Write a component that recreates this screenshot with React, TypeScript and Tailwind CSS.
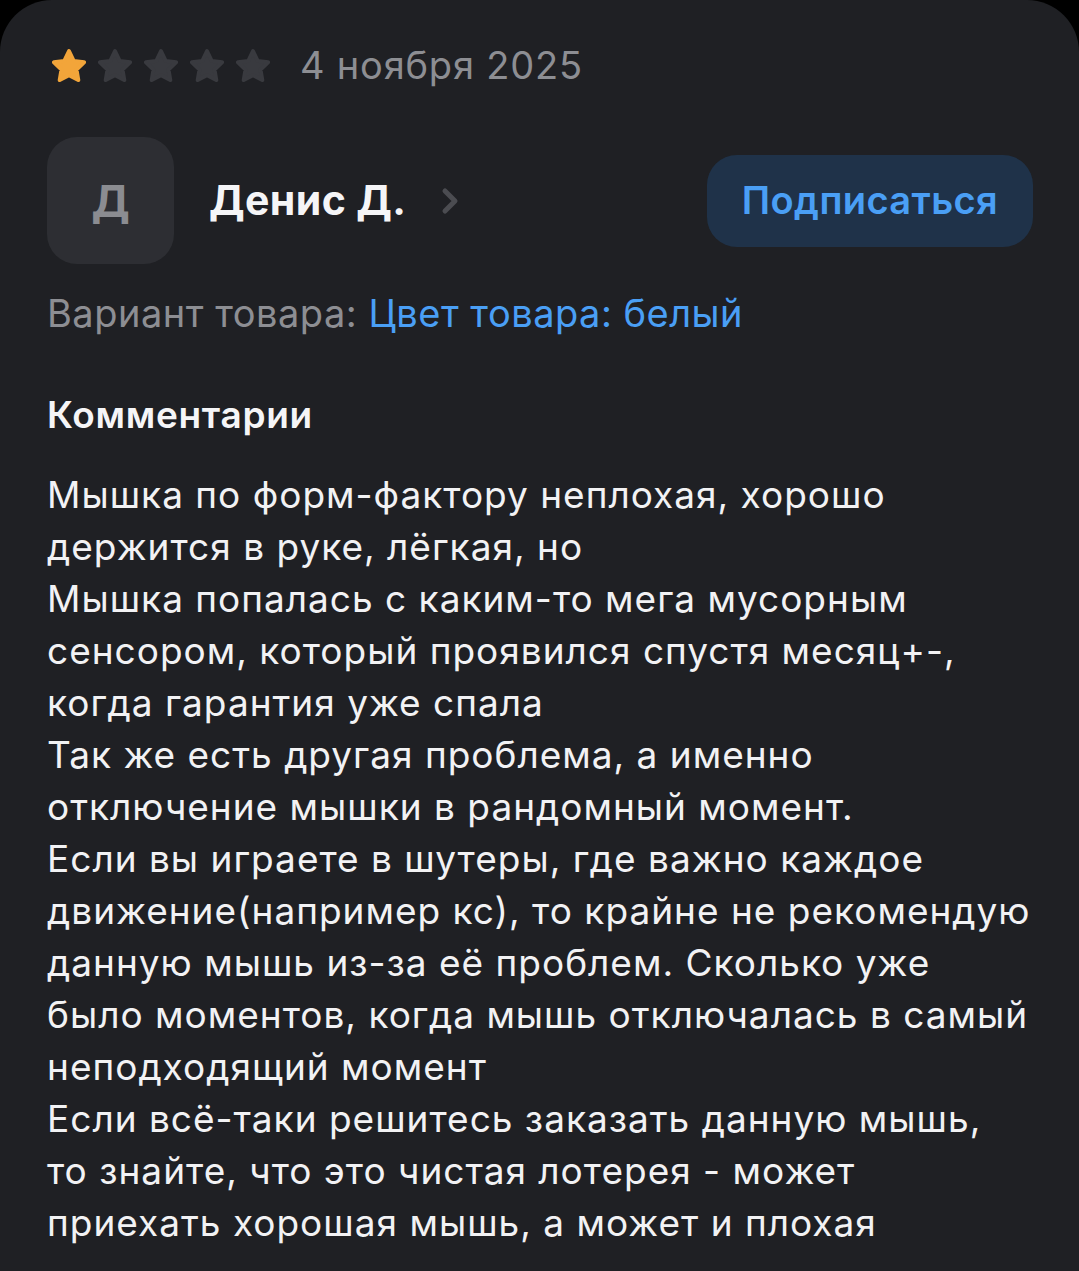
import React from 'react';

const Star = ({ filled }: { filled: boolean }) => {
  const color = filled ? '#f2a53a' : '#393a3f';
  return (
    <svg width="34" height="33" viewBox="2.6 2 18.8 18.4" aria-hidden="true">
      <path
        d="M12 3.2l2.6 5.4 5.8.8-4.2 4.1 1 5.8L12 16.6l-5.2 2.7 1-5.8-4.2-4.1 5.8-.8z"
        fill={color}
        stroke={color}
        strokeWidth={2.2}
        strokeLinejoin="round"
      />
    </svg>
  );
};

// lines as they wrap in the app
const lines = [
  'Мышка по форм-фактору неплохая, хорошо',
  'держится в руке, лёгкая, но',
  'Мышка попалась с каким-то мега мусорным',
  'сенсором, который проявился спустя месяц+-,',
  'когда гарантия уже спала',
  'Так же есть другая проблема, а именно',
  'отключение мышки в рандомный момент.',
  'Если вы играете в шутеры, где важно каждое',
  'движение(например кс), то крайне не рекомендую',
  'данную мышь из-за её проблем. Сколько уже',
  'было моментов, когда мышь отключалась в самый',
  'неподходящий момент',
  'Если всё-таки решитесь заказать данную мышь,',
  'то знайте, что это чистая лотерея - может',
  'приехать хорошая мышь, а может и плохая',
];

export default function App() {
  return (
    <div
      className="min-h-[1271px] w-[1079px] bg-black"
      style={{ fontFamily: 'Inter, "Noto Sans", sans-serif' }}
    >
      <div className="min-h-[1271px] rounded-t-[52px] bg-[#1f2024] px-[47px] pt-[44px]">
        {/* rating + date */}
        <div className="flex h-[42px] items-center">
          <div className="ml-[5px] flex gap-[12px]">
            {[0, 1, 2, 3, 4].map(i => (
              <Star key={i} filled={i === 0} />
            ))}
          </div>
          <span className="ml-[30px] text-[38px] leading-[42px] tracking-[0.8px] text-[#8d8e93]">4 ноября 2025</span>
        </div>

        {/* author row */}
        <div className="mt-[51px] flex items-center">
          <div className="flex h-[127px] w-[127px] items-center justify-center rounded-[30px] bg-[#2d2e33]">
            <span className="text-[44px] font-bold text-[#8b8c91]">Д</span>
          </div>
          <span className="ml-[35px] text-[41px] font-bold tracking-[0.4px] text-[#f5f5f7]">Денис Д.</span>
          <svg className="ml-[33px]" width="22" height="30" viewBox="0 0 22 30" aria-hidden="true">
            <path d="M6 5l10 10-10 10" fill="none" stroke="#4b4c51" strokeWidth={5} strokeLinecap="round" strokeLinejoin="round" />
          </svg>
          <button className="ml-auto mr-[-1px] h-[92px] w-[326px] rounded-[30px] bg-[#1f3249] text-[38px] font-semibold tracking-[0.4px] text-[#4a9ff5]">
            Подписаться
          </button>
        </div>

        {/* variant */}
        <div className="mt-[27px] text-[38px] leading-[44px] tracking-[0.5px] text-[#8d8e93]">
          Вариант товара: <span className="text-[#4a9ff5]">Цвет товара: белый</span>
        </div>

        {/* comments */}
        <div className="mt-[58px] text-[37px] font-semibold leading-[44px] tracking-[0.7px] text-[#f5f5f7]">Комментарии</div>
        <div className="mt-[32px] text-[37px] leading-[52px] tracking-[1px] text-[#f2f2f4]">
          {lines.map((l, i) => (
            <div key={i} className="whitespace-nowrap">{l}</div>
          ))}
        </div>
      </div>
    </div>
  );
}
